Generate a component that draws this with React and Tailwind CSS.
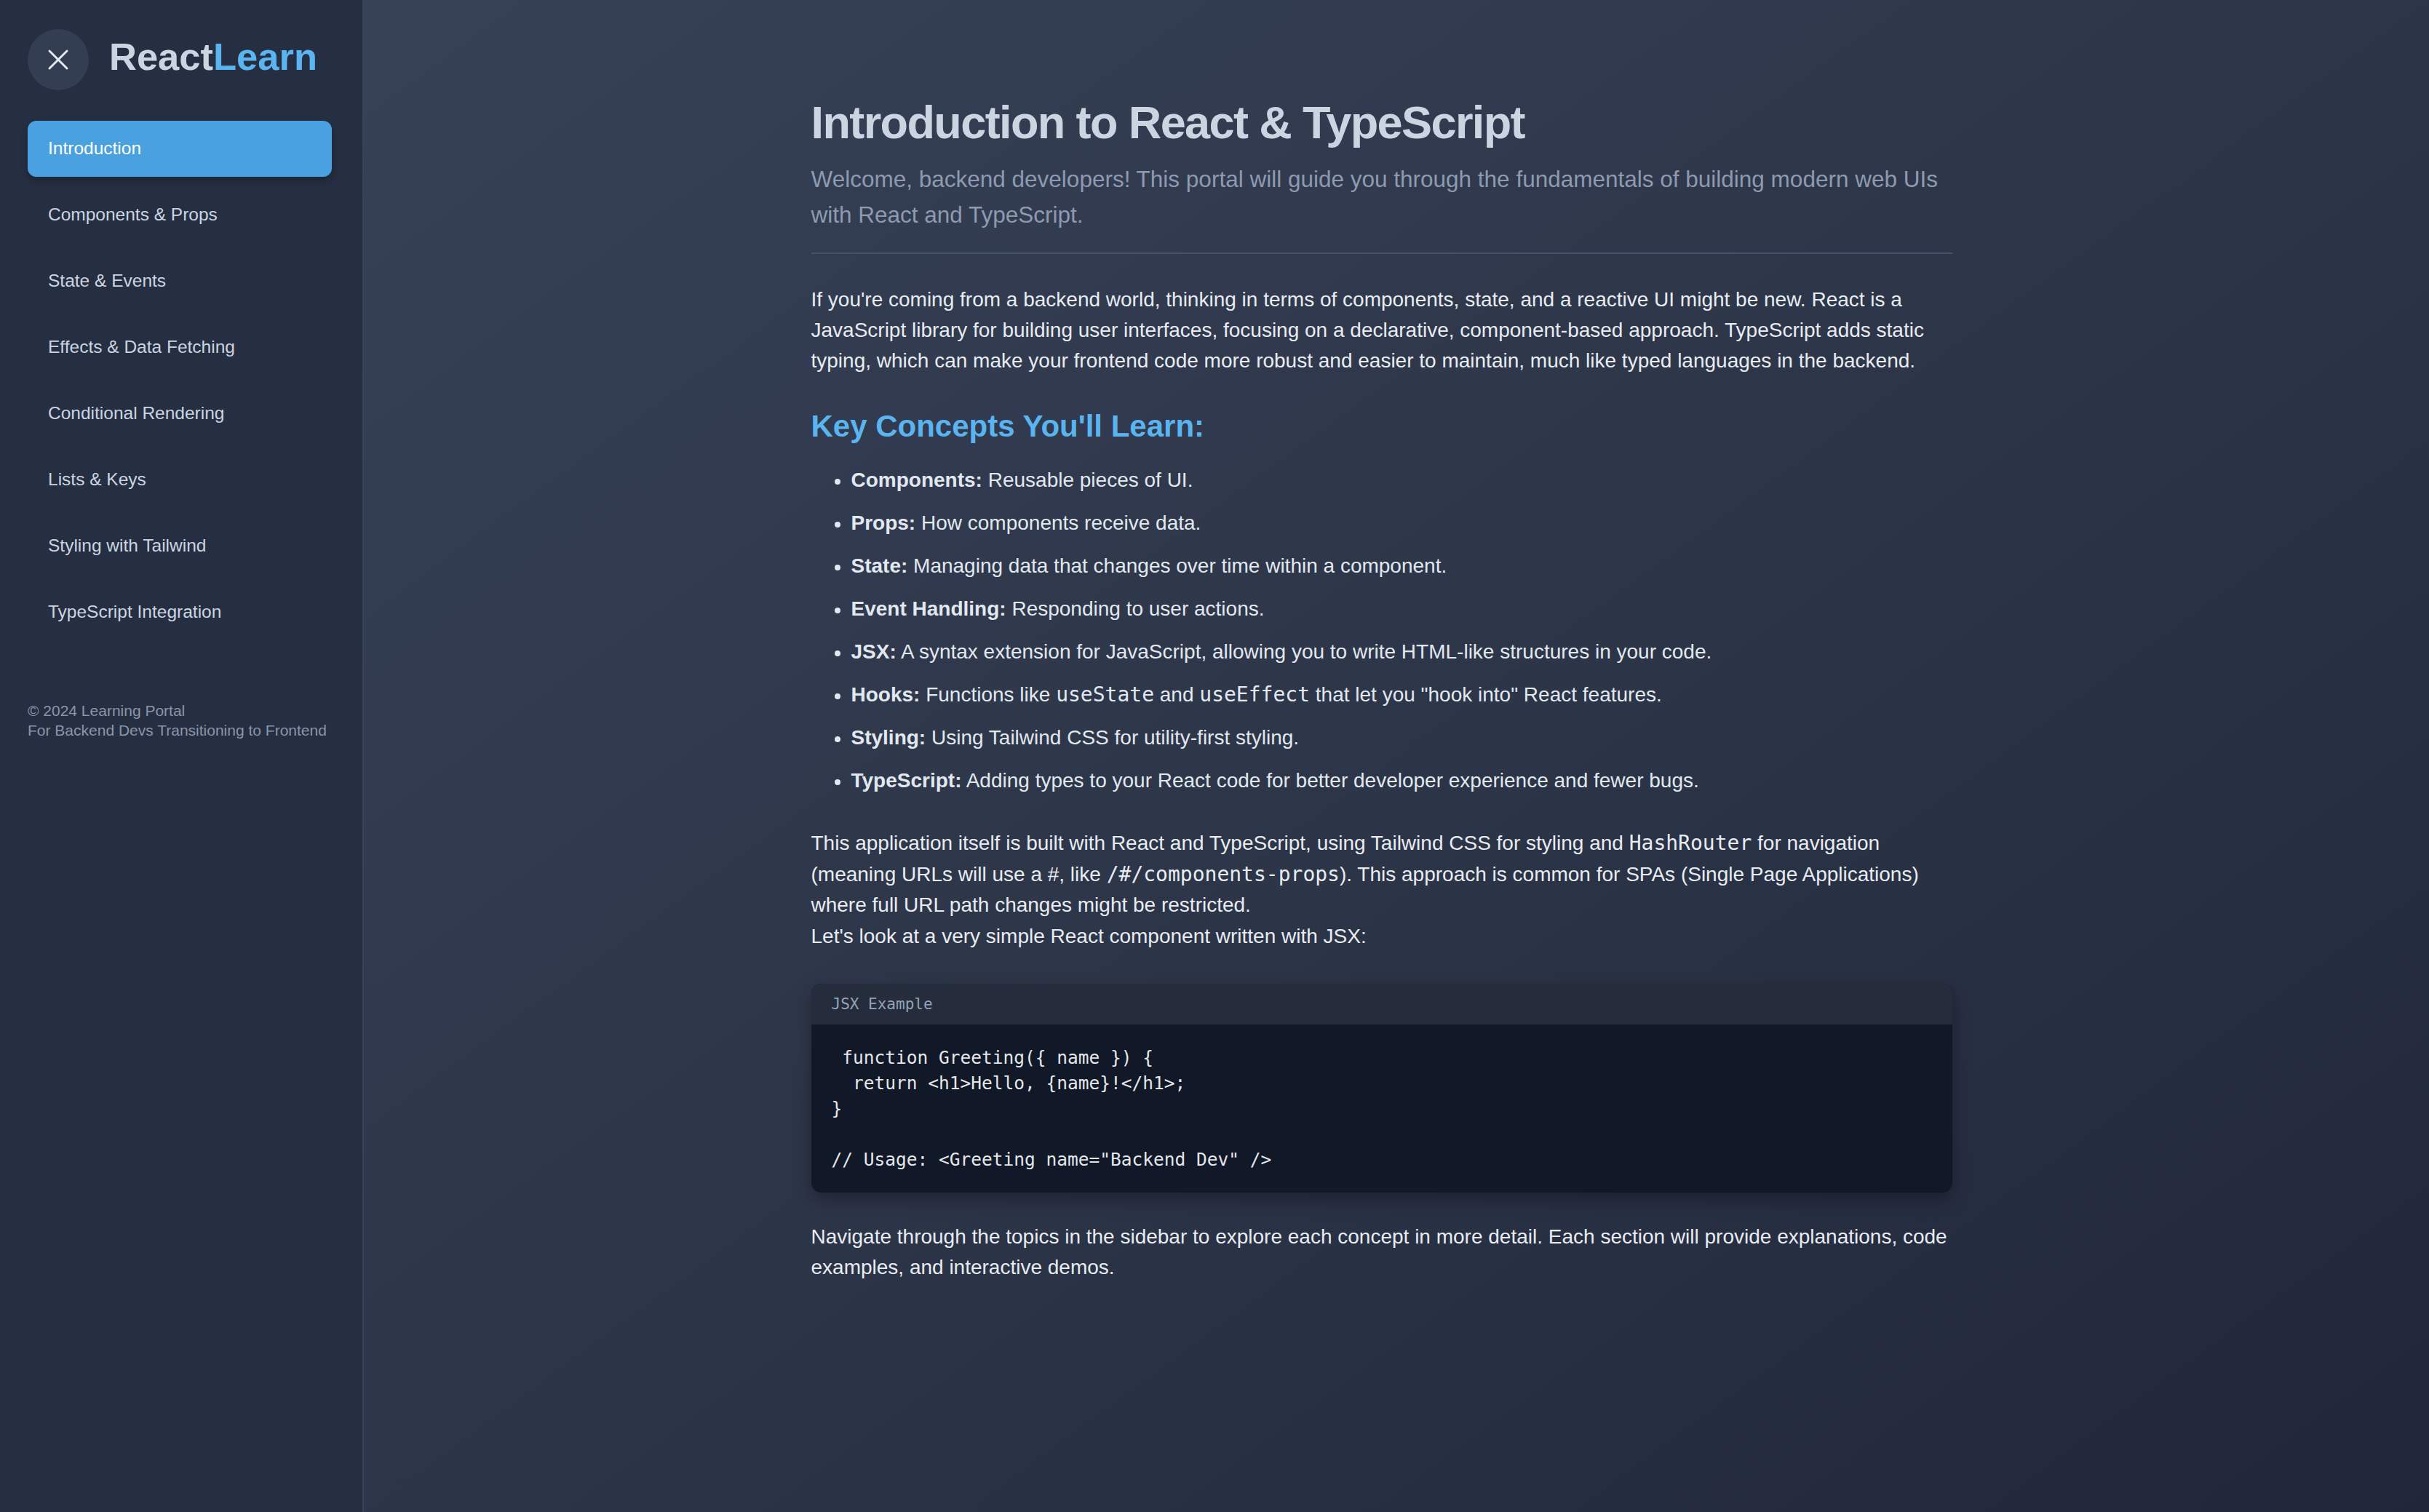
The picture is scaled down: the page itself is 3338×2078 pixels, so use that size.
import React from "react";

const navItems = [
  "Introduction",
  "Components & Props",
  "State & Events",
  "Effects & Data Fetching",
  "Conditional Rendering",
  "Lists & Keys",
  "Styling with Tailwind",
  "TypeScript Integration",
];

const concepts = [
  ["Components:", <>Reusable pieces of UI.</>],
  ["Props:", <>How components receive data.</>],
  ["State:", <>Managing data that changes over time within a component.</>],
  ["Event Handling:", <>Responding to user actions.</>],
  ["JSX:", <>A syntax extension for JavaScript, allowing you to write HTML-like structures in your code.</>],
  [
    "Hooks:",
    <>
      Functions like <code className="font-['DejaVu_Sans_Mono',monospace]">useState</code> and{" "}
      <code className="font-['DejaVu_Sans_Mono',monospace]">useEffect</code> that let you "hook into" React features.
    </>,
  ],
  ["Styling:", <>Using Tailwind CSS for utility-first styling.</>],
  ["TypeScript:", <>Adding types to your React code for better developer experience and fewer bugs.</>],
];

const code = ` function Greeting({ name }) {
  return <h1>Hello, {name}!</h1>;
}

// Usage: <Greeting name="Backend Dev" />`;

export default function App() {
  return (
    <div className="flex min-h-screen font-['Liberation_Sans',Arial,sans-serif]">
      <aside className="w-[500px] shrink-0 bg-[#262f42] border-r-2 border-[#38435a] pt-[40px] pl-[38px] pr-[42px]">
        <div className="flex items-center gap-[28px]">
          <button className="flex h-[84px] w-[84px] items-center justify-center rounded-full bg-[#343e52]">
            <svg width="48" height="48" viewBox="0 0 24 24" fill="none" stroke="#e2e8f0" strokeWidth="1.5" strokeLinecap="round">
              <path d="M18 6 6 18" />
              <path d="m6 6 12 12" />
            </svg>
          </button>
          <div className="mb-[8px] text-[52.5px] font-bold leading-[64px]">
            <span className="text-[#cbd5e1]">React</span>
            <span className="text-[#5ab4ef]">Learn</span>
          </div>
        </div>
        <nav className="mt-[42px] flex flex-col gap-[14px]">
          {navItems.map((item, i) => (
            <div
              key={item}
              className={
                i === 0
                  ? "flex h-[77px] items-center rounded-[12px] bg-[#4aa1e0] px-[28px] text-[24.5px] text-white shadow-[0_6px_12px_rgba(0,0,0,0.25)]"
                  : "flex h-[77px] items-center rounded-[12px] px-[28px] text-[24.5px] text-[#cbd5e1]"
              }
            >
              {item}
            </div>
          ))}
        </nav>
        <div className="mt-[83px] text-[21px] leading-[27px] text-[#8995a9]">
          <p>© 2024 Learning Portal</p>
          <p>For Backend Devs Transitioning to Frontend</p>
        </div>
      </aside>

      <main className="flex-1 bg-linear-to-br from-[#374257] via-[#2d3548] to-[#20273a] pt-[133px] pr-[41px] pb-[100px]">
        <div className="mx-auto max-w-[1568px]">
          <div className="border-b-2 border-[#465267] pb-[27px]">
            <h1 className="text-[63px] font-bold leading-[70px] tracking-[-1.6px] text-[#cbd5e1]">
              Introduction to React &amp; TypeScript
            </h1>
            <p className="mt-[19px] text-[31.5px] leading-[49px] text-[#8e9ab0]">
              Welcome, backend developers! This portal will guide you through the fundamentals of building modern web UIs
              with React and TypeScript.
            </p>
          </div>

          <p className="mt-[42px] text-[28px] leading-[42px] text-[#e8ecf2]">
            If you're coming from a backend world, thinking in terms of components, state, and a reactive UI might be new.
            React is a JavaScript library for building user interfaces, focusing on a declarative, component-based approach.
            TypeScript adds static typing, which can make your frontend code more robust and easier to maintain, much like
            typed languages in the backend.
          </p>

          <h2 className="mt-[41px] text-[42px] font-bold leading-[56px] text-[#5ab4ef]">Key Concepts You'll Learn:</h2>

          <ul className="mt-[25px] flex flex-col gap-[17px] text-[28px] leading-[42px] text-[#e2e8f0]">
            {concepts.map(([label, text]) => (
              <li key={label} className="flex items-start pl-[32px]">
                <span className="mt-[19px] mr-[15px] h-[8px] w-[8px] shrink-0 rounded-full bg-[#e2e8f0]" />
                <span>
                  <strong className="font-bold">{label}</strong> {text}
                </span>
              </li>
            ))}
          </ul>

          <div className="mt-[44px] text-[28px] leading-[42.5px] text-[#e8ecf2]">
            <p>
              This application itself is built with React and TypeScript, using Tailwind CSS for styling and{" "}
              <code className="font-['DejaVu_Sans_Mono',monospace]">HashRouter</code> for navigation (meaning URLs will use a #,
              like <code className="font-['DejaVu_Sans_Mono',monospace]">/#/components-props</code>). This approach is common
              for SPAs (Single Page Applications) where full URL path changes might be restricted.
            </p>
            <p>Let's look at a very simple React component written with JSX:</p>
          </div>

          <div className="mt-[44px] overflow-hidden rounded-[14px] bg-[#111827] shadow-[0_10px_24px_rgba(0,0,0,0.3)]">
            <div className="bg-[#252c3c] px-[28px] py-[14px] font-['DejaVu_Sans_Mono',monospace] text-[21px] leading-[28px] text-[#94a3b8]">
              JSX Example
            </div>
            <pre className="whitespace-pre p-[28px] font-['DejaVu_Sans_Mono',monospace] text-[24.5px] leading-[35px] text-[#e5e7eb]">
              {code}
            </pre>
          </div>

          <p className="mt-[40px] text-[28px] leading-[42px] text-[#e8ecf2]">
            Navigate through the topics in the sidebar to explore each concept in more detail. Each section will provide
            explanations, code examples, and interactive demos.
          </p>
        </div>
      </main>
    </div>
  );
}
